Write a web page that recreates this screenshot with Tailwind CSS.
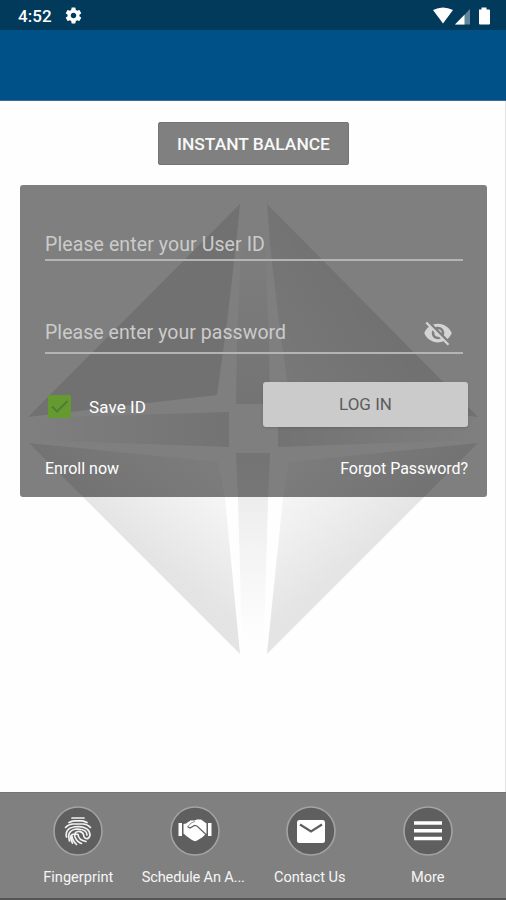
<!DOCTYPE html>
<html lang="en">
<head>
<meta charset="utf-8">
<title>Sign in</title>
<script src="https://cdn.jsdelivr.net/npm/@tailwindcss/browser@4"></script>
</head>
<body class="bg-white">
<div class="relative flex h-[900px] w-[506px] flex-col overflow-hidden bg-[#fefefe] font-['Roboto',sans-serif]">
  <header>
    <div class="flex h-[30px] items-center bg-[#023a5c] pr-[15px] pl-[18px] text-white">
      <span class="mt-[3px] w-[35px] text-[17px] font-medium tracking-[0.1px]">4:52</span>
      <svg class="mt-px ml-[11px] size-[19px]" viewBox="0 0 24 24" fill="currentColor"><path d="M19.43 12.98c.04-.32.07-.64.07-.98s-.03-.66-.07-.98l2.11-1.65c.19-.15.24-.42.12-.64l-2-3.46c-.12-.22-.39-.3-.61-.22l-2.49 1c-.52-.4-1.08-.73-1.69-.98l-.38-2.65A.488.488 0 0 0 14 2h-4c-.25 0-.46.18-.49.42l-.38 2.65c-.61.25-1.17.59-1.69.98l-2.49-1c-.23-.09-.49 0-.61.22l-2 3.46c-.13.22-.07.49.12.64l2.11 1.65c-.04.32-.07.65-.07.98s.03.66.07.98l-2.11 1.65c-.19.15-.24.42-.12.64l2 3.46c.12.22.39.3.61.22l2.49-1c.52.4 1.08.73 1.69.98l.38 2.65c.03.24.24.42.49.42h4c.25 0 .46-.18.49-.42l.38-2.65c.61-.25 1.17-.59 1.69-.98l2.49 1c.23.09.49 0 .61-.22l2-3.46c.12-.22.07-.49-.12-.64l-2.11-1.65zM12 15.5c-1.93 0-3.5-1.57-3.5-3.5s1.57-3.5 3.5-3.5 3.5 1.57 3.5 3.5-1.57 3.5-3.5 3.5z"/></svg>
      <svg class="ml-auto h-[19px] w-[60px]" viewBox="0 0 60 19" fill="currentColor">
        <path d="M2 4Q12 -1 22 4L12 17.500Z"/>
        <path d="M24 18.500L39 3V18.500Z" opacity=".38"/>
        <path d="M24 18.500L33.500 8.700V18.500Z"/>
        <path d="M48 3.500h2.500V1.500h5v2h2.500q1 0 1 1V17.500q0 1-1 1H49q-1 0-1-1V4.500q0-1 0-1Z"/>
      </svg>
    </div>
    <div class="h-[71px] border-b border-[#3c6b94] bg-[#005187]"></div>
  </header>

  <!-- Faceted diamond behind the form -->
  <svg class="absolute top-0 left-0 h-[900px] w-[506px]" viewBox="0 0 506 900">
    <defs>
      <linearGradient id="tr" gradientUnits="userSpaceOnUse" x1="275" y1="370" x2="375" y2="310"><stop stop-color="#f1f1f1"/><stop offset="1" stop-color="#e3e3e3"/></linearGradient>
      <linearGradient id="bl" gradientUnits="userSpaceOnUse" x1="225" y1="480" x2="160" y2="565"><stop stop-color="#f8f8f8"/><stop offset="1" stop-color="#e4e4e4"/></linearGradient>
      <linearGradient id="br" gradientUnits="userSpaceOnUse" x1="280" y1="480" x2="350" y2="565"><stop stop-color="#f8f8f8"/><stop offset="1" stop-color="#e4e4e4"/></linearGradient>
      <linearGradient id="up" x1="0" y1="1" x2="0" y2="0"><stop stop-color="#e8e8e8"/><stop offset="1" stop-color="#fefefe"/></linearGradient>
      <linearGradient id="dn" x1="0" y1="0" x2="0" y2="1"><stop stop-color="#e8e8e8"/><stop offset="1" stop-color="#fefefe"/></linearGradient>
      <linearGradient id="lt" x1="1" y1="0" x2="0" y2="0"><stop stop-color="#e6e6e6"/><stop offset="1" stop-color="#fefefe"/></linearGradient>
      <linearGradient id="rt"><stop stop-color="#e6e6e6"/><stop offset="1" stop-color="#fefefe"/></linearGradient>
    </defs>
    <path d="M240 204L28 417L217 395L227 322L236 245Z" fill="#e2e2e2"/>
    <path d="M267 204L478 417L289 395L279 322L270 245Z" fill="url(#tr)"/>
    <path d="M29 443L240 654L225 498L218 462Z" fill="url(#bl)"/>
    <path d="M478 443L267 654L283 498L289 462Z" fill="url(#br)"/>
    <path d="M242 225H264L269 340L270 404H236L237 340Z" fill="url(#up)"/>
    <path d="M236 453H270L268 500L264 640H242L238 500Z" fill="url(#dn)"/>
    <path d="M32 418L229 412V447L32 440Z" fill="url(#lt)"/>
    <path d="M475 418L278 412V447L475 440Z" fill="url(#rt)"/>
  </svg>

  <main class="relative flex flex-1 flex-col items-center border-r border-[#e3e3e3] pt-[21px]">
    <button class="ml-[2px] h-[43px] w-[191px] rounded-[2px] border border-[#747474] bg-[#808080] pt-[2px] text-[17.400px] font-medium whitespace-nowrap text-[#f8f8f8]">INSTANT BALANCE</button>

    <form class="mt-5 ml-[2px] flex h-[312px] w-[467px] flex-col rounded-[3px] bg-black/50 px-[25px] text-white">
      <div class="mt-[43px] flex h-[33px] w-[418px] items-center border-b-2 border-[#b4b4b4] text-[19.500px] text-[#cbcbcb]"><span class="pt-[2px] tracking-[0.1px]">Please enter your User ID</span></div>
      <div class="mt-[56px] flex h-[37px] w-[418px] items-center justify-between border-b-2 border-[#b4b4b4] text-[19.500px] text-[#cbcbcb]">
        <span class="pb-[3px] tracking-[0.05px]">Please enter your password</span>
        <svg class="mr-[10px] mb-[4px] size-[30px]" viewBox="0 0 24 24" fill="#d4d4d4"><path d="M12 7c2.760 0 5 2.240 5 5 0 .65-.13 1.260-.36 1.830l2.920 2.920c1.510-1.260 2.700-2.890 3.430-4.750-1.730-4.390-6-7.500-11-7.500-1.400 0-2.740.25-3.980.7l2.160 2.160C10.740 7.130 11.350 7 12 7zM2 4.270l2.280 2.280.46.46C3.080 8.300 1.780 10.020 1 12c1.730 4.390 6 7.500 11 7.500 1.550 0 3.030-.3 4.380-.84l.42.42L19.730 22 21 20.730 3.270 3 2 4.270zM7.530 9.800l1.550 1.550c-.05.21-.08.43-.08.65 0 1.660 1.340 3 3 3 .22 0 .44-.03.65-.08l1.550 1.550c-.67.33-1.410.53-2.200.53-2.760 0-5-2.240-5-5 0-.79.2-1.530.53-2.200zm4.310-.78l3.150 3.150.02-.16c0-1.660-1.340-3-3-3l-.17.01z"/></svg>
      </div>
      <div class="mt-[28px] flex items-center">
        <svg class="mt-[4px] ml-[3px] h-[23px] w-[23px]" viewBox="0 0 23 23"><rect width="23" height="23" rx="1.500" fill="#659a30"/><path d="M4 11.500L9 16.500L19.500 6" fill="none" stroke="#4f7d33" stroke-width="2"/></svg>
        <span class="mt-[7px] ml-[18px] text-[17px] tracking-[0.1px]">Save ID</span>
        <button type="button" class="ml-auto -mr-[6px] h-[45px] w-[205px] rounded-[3px] bg-[#cbcbcb] pt-px text-[17px] text-[#5c5c5c] shadow-sm">LOG IN</button>
      </div>
      <div class="mt-[29px] flex justify-between text-[16px] leading-[26px]">
        <a>Enroll now</a><a class="-mr-[6px] tracking-[-0.05px] whitespace-nowrap">Forgot Password?</a>
      </div>
    </form>
  </main>

  <nav class="relative flex h-[108px] border-t border-[#747474] border-b-2 border-b-[#555] bg-[#808080] px-5 pt-[13px] text-[14.600px] text-[#f5f5f5]">
    <a class="flex w-[117px] flex-col items-center">
      <svg class="size-[50px]" viewBox="0 0 50 50"><circle cx="25" cy="25" r="24" fill="#5f5f5f" stroke="#a3a3a3" stroke-width="1.600"/>
        <g fill="none" stroke="#f2f2f2" stroke-width="1.700" stroke-linecap="round"><path d="M19 12H31M16 16.500Q19 14.800 21 14.800H29Q31 14.800 34 16.500M12.500 21.500Q16 18 20 18H30Q34 18 37.500 21.500"/><path d="M13.500 31Q11.500 21 25 20.500Q37 21 37 29.500Q35.500 34 32 32Q30.500 31 30.500 28.500Q29 25 25 25.500Q20.500 26.500 22 31Q24 36 28.500 37.500M16.500 35Q13 23.500 25 23Q34 23.500 34 29M19.500 37Q14 26 25 28.500M25 28.500Q25.500 34 33 35.500M23.500 38.500Q19 34 19 30"/></g></svg>
      <span class="mt-[11px] leading-5">Fingerprint</span>
    </a>
    <a class="flex w-[117px] flex-col items-center">
      <svg class="size-[50px]" viewBox="0 0 50 50"><circle cx="25" cy="25" r="24" fill="#5f5f5f" stroke="#a3a3a3" stroke-width="1.600"/>
        <path fill="#fff" d="M8.500 17H12V30H8.500ZM38 17H41.500V30H38ZM13.500 18L16 17.500L20.500 14.500H24.500L27 13.500H31L36.500 17.500V27.500L32 31.500L27 34.500Q25 36 22 34L17 30.500L13.500 27.500Z"/>
        <path d="M17.500 20.500L20 22L24.500 19.500L27 20L36 28.500" fill="none" stroke="#5f5f5f" stroke-width="1.200"/><path d="M18 20.500L21 17L25 15.500" fill="none" stroke="#777" stroke-width=".8"/></svg>
      <span class="mt-[11px] -ml-[3px] w-[108px] text-center leading-5 tracking-[-0.15px] whitespace-nowrap">Schedule An A...</span>
    </a>
    <a class="flex w-[117px] flex-col items-center">
      <svg class="size-[50px]" viewBox="0 0 50 50"><circle cx="25" cy="25" r="24" fill="#5f5f5f" stroke="#a3a3a3" stroke-width="1.600"/><rect x="11" y="14" width="28" height="23" rx="2.500" fill="#fff"/><path d="M14 18.500L25 25.500L36 18.500" fill="none" stroke="#5f5f5f" stroke-width="2.200"/></svg>
      <span class="mt-[11px] -ml-[3px] leading-5">Contact Us</span>
    </a>
    <a class="flex w-[117px] flex-col items-center">
      <svg class="size-[50px]" viewBox="0 0 50 50"><circle cx="25" cy="25" r="24" fill="#5f5f5f" stroke="#a3a3a3" stroke-width="1.600"/><path d="M11 17H39M11 24.800H39M11 32.500H39" stroke="#fff" stroke-width="3.400"/></svg>
      <span class="mt-[11px] leading-5">More</span>
    </a>
  </nav>
</div>
</body>
</html>
